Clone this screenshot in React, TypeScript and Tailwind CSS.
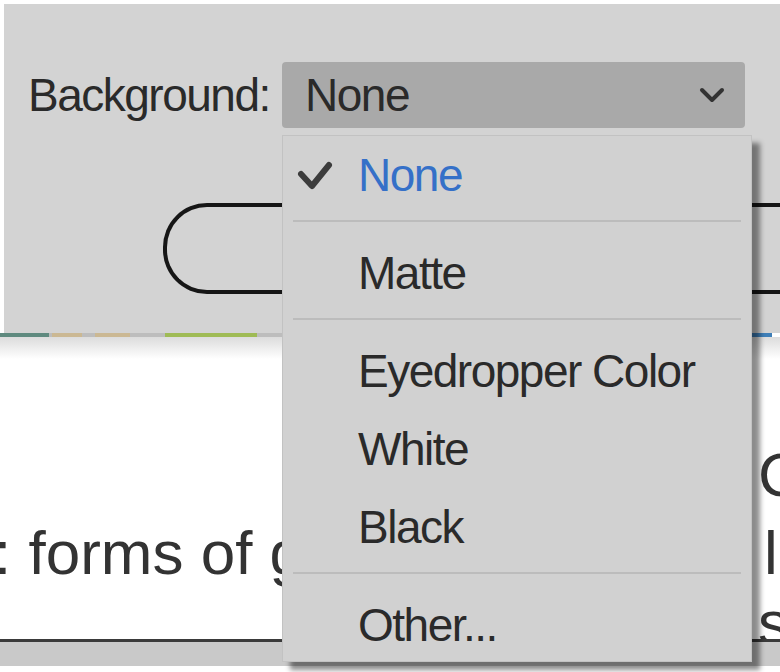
import { Fragment } from "react";

const items: { label: string; checked?: boolean; sepAfter?: boolean }[] = [
  { label: "None", checked: true, sepAfter: true },
  { label: "Matte", sepAfter: true },
  { label: "Eyedropper Color" },
  { label: "White" },
  { label: "Black", sepAfter: true },
  { label: "Other..." },
];

const strip = [
  { w: "w-[49px]", c: "bg-[#5f8a7f]" },
  { w: "w-[3px]", c: "bg-[#bdbdbd]" },
  { w: "w-[30px]", c: "bg-[#cbb893]" },
  { w: "w-[13px]", c: "bg-[#bdbdbd]" },
  { w: "w-[35px]", c: "bg-[#cbb893]" },
  { w: "w-[35px]", c: "bg-[#bdbdbd]" },
  { w: "w-[92px]", c: "bg-[#9fbb55]" },
  { w: "w-[495px]", c: "bg-[#bdbdbd]" },
  { w: "w-[20px]", c: "bg-[#3f7fb8]" },
];

function Check() {
  return (
    <svg width="36" height="34" viewBox="0 0 36 34" className="absolute left-[14px] top-[24px]">
      <path d="M4 14 L15 26 L32 5" fill="none" stroke="#3c3c3c" strokeWidth="6" strokeLinecap="round" strokeLinejoin="round" />
    </svg>
  );
}

export default function App() {
  return (
    <div className="relative w-[780px] h-[672px] overflow-hidden bg-white font-['Liberation_Sans',Arial,sans-serif] text-[#2a2a2a]">
      {/* dialog panel */}
      <div className="pt-[4px] pl-[4px]">
        <div className="bg-[#d3d3d3] h-[329px] flex flex-col">
          <div className="flex items-center mt-[58px]">
            <div className="w-[278px] pl-[24px] text-[46px] tracking-[-1.5px] leading-none">Background:</div>
            <div className="w-[463px] h-[66px] bg-[#a9a9a9] rounded-[4px] flex items-center justify-between pl-[23px] pr-[20px]">
              <span className="text-[46px] tracking-[-1.5px] leading-none">None</span>
              <svg width="26" height="16" viewBox="0 0 26 16">
                <path d="M3 3 L13 13 L23 3" fill="none" stroke="#333" strokeWidth="4" strokeLinecap="round" strokeLinejoin="round" />
              </svg>
            </div>
          </div>
          <div className="flex mt-[75px] ml-[159px] mr-[-40px]">
            <div className="flex-1 h-[91px] border-[4px] border-r-0 border-[#161616] rounded-l-[44px]" />
          </div>
        </div>
      </div>
      <div className="flex h-[4px]">
        {strip.map((s, i) => (
          <div key={i} className={`${s.w} ${s.c} h-full`} />
        ))}
      </div>

      {/* page content */}
      <div className="h-[302px] overflow-hidden text-[62px] leading-[78px] text-[#333] whitespace-nowrap">
        <div className="h-[22px] bg-linear-to-b from-[#dcdcdc] to-white" />
        <div className="pt-[77px] pl-[758px]">Co</div>
        <div className="pl-[764px] relative">
          ld
          <span className="absolute left-[-6px] top-0">: forms of graphic</span>
        </div>
        <div className="pl-[758px] mt-[-8px]">s</div>
      </div>
      <div className="h-[3px] bg-[#3a3a3a]" />
      <div className="h-[24px] bg-[#c9c9c9]" />

      {/* open menu */}
      <div className="absolute left-[282px] top-[135px] w-[470px] h-[527px] bg-[#d1d1d1] border border-[#c2c2c2] shadow-[8px_8px_5px_rgba(0,0,0,0.45)]">
        {items.map((it) => (
          <Fragment key={it.label}>
            <div className="relative h-[78px] flex items-center pl-[75px] text-[46px] tracking-[-1.5px] leading-none">
              {it.checked && <Check />}
              <span className={it.checked ? "text-[#3570c8]" : "text-[#2a2a2a]"}>{it.label}</span>
            </div>
            {it.sepAfter && (
              <div className="h-[20px] pt-[6px] px-[10px]">
                <div className="h-[2px] bg-[#bcbcbc]" />
              </div>
            )}
          </Fragment>
        ))}
      </div>
    </div>
  );
}
